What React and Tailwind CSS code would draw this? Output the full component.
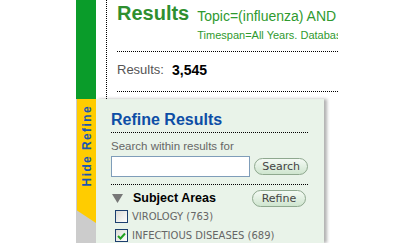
export default function App() {
  const font = { fontFamily: '"Liberation Sans", Arial, sans-serif' };
  const small = { fontFamily: '"DejaVu Sans", Verdana, sans-serif' };
  return (
    <div className="w-[415px] h-[243px] bg-white overflow-hidden flex" style={font}>
      <div className="w-[76px] shrink-0" />
      <div className="w-[20px] shrink-0 flex flex-col">
        <div className="h-[99px] bg-[#0a9c2a]" />
        <div className="relative flex-1 bg-[#cccccc]">
          <div className="ml-px h-[124px] bg-[#ffcc00] flex items-start justify-center pt-[6px] [clip-path:polygon(0_0,100%_0,100%_100%,0_90%)]">
            <span className="[writing-mode:vertical-rl] rotate-180 text-[12px] font-bold tracking-[1.4px] text-[#1a56b0] leading-none">
              Hide Refine
            </span>
          </div>
        </div>
      </div>
      <div className="flex-1 flex flex-col">
        <div className="h-[99px] flex">
          <div className="ml-[10px] border-l border-dotted border-black pl-[10px] w-[232px] overflow-hidden whitespace-nowrap">
            <div className="flex items-start h-[52px] border-b border-dotted border-black">
              <div className="text-[20px] font-bold text-[#2f8f2f] leading-[24px] mt-[1px]">Results</div>
              <div className="ml-[8px] mt-[8px]">
                <div className="text-[14px] text-[#2f9a2f] leading-[16px]">Topic=(influenza) AND</div>
                <div className="text-[11px] text-[#2f9a2f] leading-[13px] mt-[5px]">Timespan=All Years. Databases=SCI-EXPANDED</div>
              </div>
            </div>
            <div className="h-[40px] flex items-center border-b border-dotted border-black pb-[3px]">
              <span className="text-[13px] text-[#555]">Results:</span>
              <span className="ml-[8px] text-[14px] font-bold text-black">3,545</span>
            </div>
          </div>
        </div>
        <div className="w-[228px] flex-1 bg-[#e9f3e9] shadow-[3px_0_3px_rgba(0,0,0,0.3)] pl-[15px] pr-[16px] pt-[11px]">
          <div className="text-[16px] font-bold text-[#0d4ea6] leading-[19px]">Refine Results</div>
          <div className="mt-[3px] border-b border-dotted border-black" />
          <div className="mt-[6px] text-[11.5px] text-[#666] leading-[14px]">Search within results for</div>
          <div className="mt-[3px] flex items-center">
            <div className="w-[140px] h-[21px] bg-white border border-[#7f9db9]" />
            <button style={small} className="ml-[4px] w-[54px] h-[17px] rounded-full border border-[#8fa88f] bg-gradient-to-b from-[#f4faf4] to-[#cfe5cf] text-[11px] text-[#444] leading-none">
              Search
            </button>
          </div>
          <div className="mt-[7px] border-b border-dotted border-black" />
          <div className="mt-[5px] flex items-center h-[17px]">
            <svg width="11" height="9" viewBox="0 0 11 9" className="ml-[1px]">
              <polygon points="0,0 11,0 5.5,9" fill="#777" />
            </svg>
            <span className="ml-[10px] text-[12.5px] font-bold text-black">Subject Areas</span>
            <button style={small} className="ml-auto mr-[2px] w-[54px] h-[17px] rounded-full border border-[#8fa88f] bg-gradient-to-b from-[#f4faf4] to-[#cfe5cf] text-[11px] text-[#444] leading-none">
              Refine
            </button>
          </div>
          <div className="mt-[3px] flex items-center h-[13px] ml-[4px]">
            <div className="w-[13px] h-[13px] border border-[#1c3f6e] bg-gradient-to-br from-[#dcdcd6] to-white" />
            <span style={small} className="ml-[4px] text-[10px] text-[#666] leading-none">VIROLOGY (763)</span>
          </div>
          <div className="mt-[6px] flex items-center h-[13px] ml-[4px]">
            <div className="w-[13px] h-[13px] border border-[#1c3f6e] bg-gradient-to-br from-[#dcdcd6] to-white flex items-center justify-center">
              <svg width="9" height="8" viewBox="0 0 9 8">
                <path d="M1 4 L3.5 6.5 L8 1.5" stroke="#21a121" strokeWidth="2" fill="none" />
              </svg>
            </div>
            <span style={small} className="ml-[4px] text-[10px] text-[#666] leading-none">INFECTIOUS DISEASES (689)</span>
          </div>
        </div>
      </div>
    </div>
  );
}
